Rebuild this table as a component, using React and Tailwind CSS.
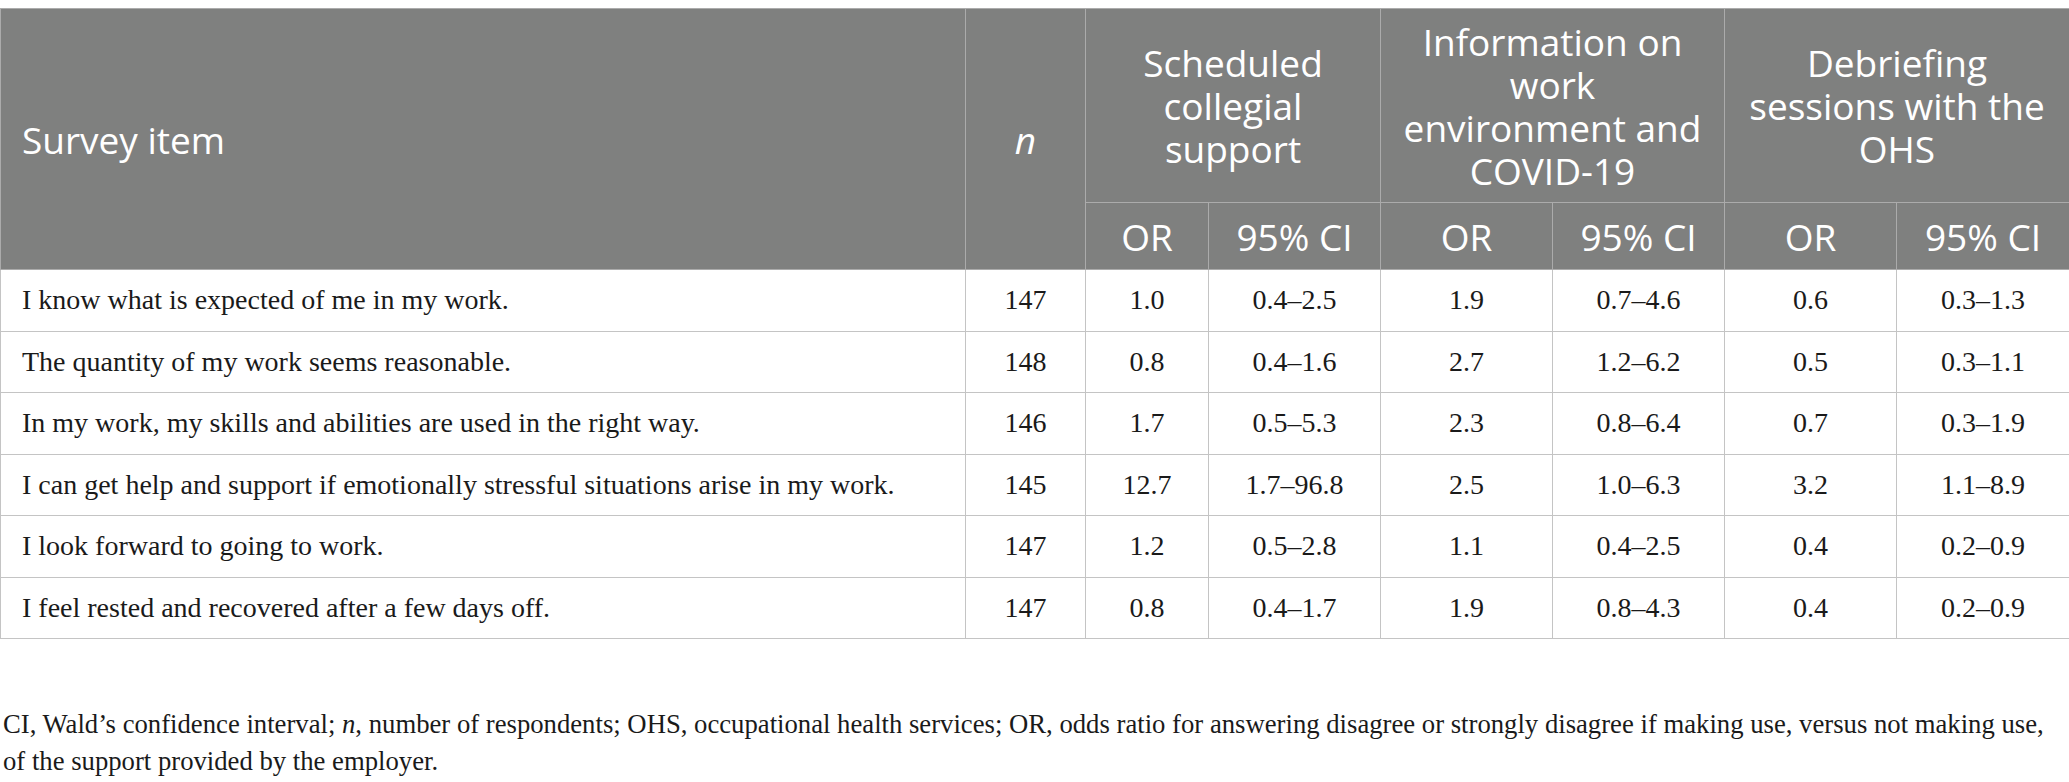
const rows = [
  ['I know what is expected of me in my work.', '147', '1.0', '0.4–2.5', '1.9', '0.7–4.6', '0.6', '0.3–1.3'],
  ['The quantity of my work seems reasonable.', '148', '0.8', '0.4–1.6', '2.7', '1.2–6.2', '0.5', '0.3–1.1'],
  ['In my work, my skills and abilities are used in the right way.', '146', '1.7', '0.5–5.3', '2.3', '0.8–6.4', '0.7', '0.3–1.9'],
  ['I can get help and support if emotionally stressful situations arise in my work.', '145', '12.7', '1.7–96.8', '2.5', '1.0–6.3', '3.2', '1.1–8.9'],
  ['I look forward to going to work.', '147', '1.2', '0.5–2.8', '1.1', '0.4–2.5', '0.4', '0.2–0.9'],
  ['I feel rested and recovered after a few days off.', '147', '0.8', '0.4–1.7', '1.9', '0.8–4.3', '0.4', '0.2–0.9'],
];

const head = "border border-[#ababab] text-white font-['Open_Sans',sans-serif] text-[37px] leading-[43px] font-normal";
const cell = 'border border-[#c4c4c4] text-center';

export default function App() {
  return (
    <div className="w-[2069px] bg-white pt-[8px] font-['Liberation_Serif',serif] text-[#1a1a1a]">
      <table className="w-[2069px] table-fixed border-collapse">
        <colgroup>
          <col className="w-[965px]" />
          <col className="w-[120px]" />
          <col className="w-[123px]" />
          <col className="w-[172px]" />
          <col className="w-[172px]" />
          <col className="w-[172px]" />
          <col className="w-[172px]" />
          <col className="w-[173px]" />
        </colgroup>
        <thead className="bg-[#7f807f]">
          <tr className="h-[194px]">
            <th rowSpan={2} className={`${head} text-left pl-[21px]`}>Survey item</th>
            <th rowSpan={2} className={`${head} italic`}>n</th>
            <th colSpan={2} className={head}>Scheduled<br />collegial<br />support</th>
            <th colSpan={2} className={head}>Information on<br />work<br />environment and<br />COVID-19</th>
            <th colSpan={2} className={head}>Debriefing<br />sessions with the<br />OHS</th>
          </tr>
          <tr className="h-[67px]">
            {['OR', '95% CI', 'OR', '95% CI', 'OR', '95% CI'].map((t, i) => (
              <th key={i} className={head}>{t}</th>
            ))}
          </tr>
        </thead>
        <tbody className="text-[28px]">
          {rows.map((r, i) => (
            <tr key={i} className="h-[61.5px]">
              <td className="border border-[#c4c4c4] pl-[21px]">{r[0]}</td>
              {r.slice(1).map((v, j) => (
                <td key={j} className={cell}>{v}</td>
              ))}
            </tr>
          ))}
        </tbody>
      </table>
      <p className="mt-[67px] pl-[3px] text-[26.7px] leading-[37px]">
        CI, Wald’s confidence interval; <i>n</i>, number of respondents; OHS, occupational health services; OR, odds ratio for answering disagree or strongly disagree if making use, versus not making use,
        <br />
        of the support provided by the employer.
      </p>
    </div>
  );
}
